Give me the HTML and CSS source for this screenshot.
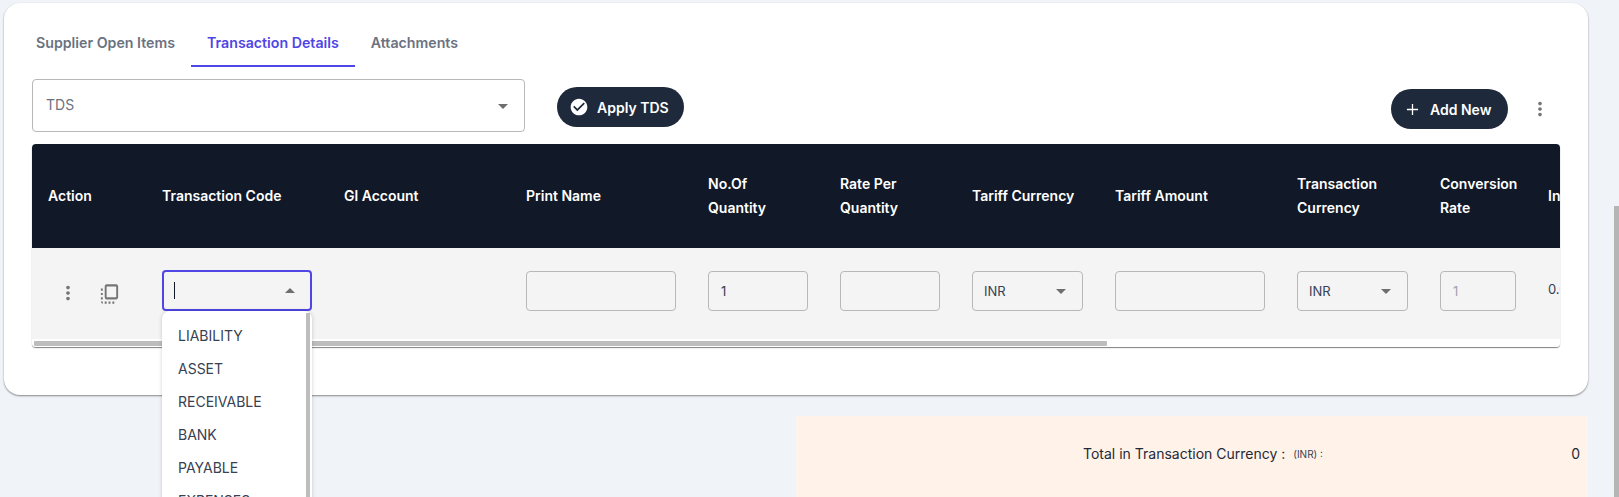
FILE: index.html
```html
<!DOCTYPE html>
<html lang="en">
<head>
<meta charset="utf-8">
<title>Transaction Details</title>
<link rel="stylesheet" href="styles.css">
</head>
<body>
<main class="page">
  <section class="card">
    <nav class="tabs">
      <a class="tab">Supplier Open Items</a>
      <a class="tab tab-active">Transaction Details</a>
      <a class="tab">Attachments</a>
    </nav>
    <div class="toolbar">
      <div class="select tds-select"><span>TDS</span><i class="arrow"></i></div>
      <button class="btn btn-apply">
        <svg class="btn-check" viewBox="0 0 24 24"><path fill="#fff" d="M12 2C6.48 2 2 6.48 2 12s4.48 10 10 10 10-4.48 10-10S17.52 2 12 2zm-2 15l-5-5 1.41-1.41L10 14.17l7.59-7.59L19 8l-9 9z"/></svg>
        Apply TDS
      </button>
      <div class="toolbar-spacer"></div>
      <button class="btn btn-add">
        <svg class="btn-plus" viewBox="0 0 14 14"><path d="M7 1v12M1 7h12" stroke="#fff" stroke-width="1.4" fill="none"/></svg>
        Add New
      </button>
      <svg class="more more-top" viewBox="0 0 24 24"><path d="M12 8c1.1 0 2-.9 2-2s-.9-2-2-2-2 .9-2 2 .9 2 2 2zm0 2c-1.1 0-2 .9-2 2s.9 2 2 2 2-.9 2-2-.9-2-2-2zm0 6c-1.1 0-2 .9-2 2s.9 2 2 2 2-.9 2-2-.9-2-2-2z"/></svg>
    </div>
    <div class="table-wrap">
      <div class="table-scroll">
        <div class="grid grid-head">
          <div class="th">Action</div>
          <div class="th">Transaction Code</div>
          <div class="th">Gl Account</div>
          <div class="th">Print Name</div>
          <div class="th">No.Of Quantity</div>
          <div class="th">Rate Per Quantity</div>
          <div class="th">Tariff Currency</div>
          <div class="th">Tariff Amount</div>
          <div class="th">Transaction Currency</div>
          <div class="th">Conversion Rate</div>
          <div class="th">Invoice Amount</div>
        </div>
        <div class="grid grid-row">
          <div class="td td-action">
            <svg class="more" viewBox="0 0 24 24"><path d="M12 8c1.1 0 2-.9 2-2s-.9-2-2-2-2 .9-2 2 .9 2 2 2zm0 2c-1.1 0-2 .9-2 2s.9 2 2 2 2-.9 2-2-.9-2-2-2zm0 6c-1.1 0-2 .9-2 2s.9 2 2 2 2-.9 2-2-.9-2-2-2z"/></svg>
            <svg class="flip" viewBox="0 0 24 24" preserveAspectRatio="none"><path d="M3 13h2v-2H3v2zm0 4h2v-2H3v2zm2 4v-2H3c0 1.1.89 2 2 2zM3 9h2V7H3v2zm12 12h2v-2h-2v2zm4-18H9c-1.11 0-2 .9-2 2v10c0 1.1.89 2 2 2h10c1.1 0 2-.9 2-2V5c0-1.1-.9-2-2-2zm0 12H9V5h10v10zm-8 6h2v-2h-2v2zm-4 0h2v-2H7v2z"/></svg>
          </div>
          <div class="td"><div class="select select-focus"><i class="caret"></i><i class="arrow arrow-up"></i></div></div>
          <div class="td"></div>
          <div class="td"><input class="field" type="text"></div>
          <div class="td"><input class="field" type="text" value="1"></div>
          <div class="td"><input class="field" type="text"></div>
          <div class="td"><div class="select"><span>INR</span><i class="arrow"></i></div></div>
          <div class="td"><input class="field" type="text"></div>
          <div class="td"><div class="select"><span>INR</span><i class="arrow"></i></div></div>
          <div class="td"><input class="field field-disabled" type="text" value="1" disabled></div>
          <div class="td td-text">0.00</div>
        </div>
        <div class="hscroll"><div class="hscroll-thumb"></div></div>
      </div>
      <ul class="dropdown">
        <li>LIABILITY</li>
        <li>ASSET</li>
        <li>RECEIVABLE</li>
        <li>BANK</li>
        <li>PAYABLE</li>
        <li>EXPENSES</li>
      </ul>
    </div>
  </section>
  <section class="totals">
    <span class="totals-label">Total in Transaction Currency :</span>
    <span class="totals-cur">(INR) :</span>
    <span class="totals-value">0</span>
  </section>
</main>
<div class="page-scroll"></div>
</body>
</html>
```
FILE: styles.css
```css
* { box-sizing: border-box; }
html, body { margin: 0; height: 100%; overflow: hidden; }
body {
  background: #f0f4f9;
  font-family: Inter, "Liberation Sans", sans-serif;
  color: #1f2937;
}
.page { padding: 3px 31px 0 4px; }
.card {
  background: #fff;
  border-radius: 16px;
  padding: 17px 28px 0;
  height: 392px;
  box-shadow: 0 1px 2px rgba(0, 0, 0, .45);
}
.tabs { display: flex; margin-left: -12px; height: 47px; }
.tab {
  padding: 14px 16px 0;
  font-size: 14.2px;
  line-height: 17px;
  font-weight: 600;
  color: #6b7280;
  border-bottom: 2px solid transparent;
  white-space: nowrap;
}
.tab-active { color: #4f46e5; border-bottom-color: #4f46e5; }
.toolbar { display: flex; align-items: center; margin-top: 12px; height: 53px; }
.toolbar-spacer { flex: 1; }
.select {
  position: relative;
  display: flex;
  align-items: center;
  height: 40px;
  padding-left: 11px;
  border: 1px solid #b8b8b8;
  border-radius: 4px;
  font-size: 13px;
  color: #374151;
}
.tds-select { width: 493px; height: 53px; padding: 0 0 2px 13px; font-size: 14px; color: #6b7280; }
.arrow {
  position: absolute;
  right: 16px;
  top: 50%;
  margin-top: -2px;
  border-left: 5px solid transparent;
  border-right: 5px solid transparent;
  border-top: 5px solid #6e6e6e;
}
.arrow-up { border-top: 0; border-bottom: 5px solid #6e6e6e; right: 15px; margin-top: -3px; }
.btn {
  display: flex;
  align-items: center;
  height: 40px;
  border: 0;
  border-radius: 20px;
  background: #1e293b;
  color: #fff;
  font: 600 14px Inter, "Liberation Sans", sans-serif;
  white-space: nowrap;
}
.btn-apply { width: 127px; margin: 3px 0 0 32px; padding: 0 0 0 12px; gap: 8px; }
.btn-check { width: 20px; height: 20px; }
.btn-add { width: 117px; margin-top: 7px; padding: 0 0 0 15px; gap: 11px; }
.btn-plus { width: 13px; height: 13px; }
.more { width: 22px; height: 22px; fill: #757575; flex: none; }
.more-top { margin: 7px 9px 0 21px; }
.table-wrap { position: relative; margin-top: 12px; }
.table-scroll {
  overflow: hidden;
  border-radius: 4px;
  box-shadow: 0 1px 1px rgba(0, 0, 0, .5);
  height: 203px;
}
.grid {
  display: grid;
  grid-template-columns: 114px 182px 182px 182px 132px 132px 143px 182px 143px 108px 140px;
  width: 1640px;
}
.grid-head { background: #111827; height: 104px; align-items: center; }
.th {
  padding: 0 16px;
  font-size: 14px;
  line-height: 24px;
  font-weight: 600;
  color: #fff;
}
.grid-row { background: #f4f4f4; height: 91px; }
.td { padding: 23px 16px 0; font-size: 13px; }
.td-action { display: flex; align-items: flex-start; padding: 33px 0 0 25px; gap: 19px; }
.td-action .more { margin-top: 1px; }
.td-text { padding-top: 33px; color: #374151; }
.flip { width: 23px; height: 26px; fill: #757575; }
.select-focus { border: 2px solid #4f46e5; padding-left: 10px; height: 41px; margin-top: -1px; }
.caret { width: 1px; height: 17px; background: #111827; }
.field {
  display: block;
  width: 100%;
  height: 40px;
  padding: 0 12px;
  border: 1px solid #b8b8b8;
  border-radius: 4px;
  background: transparent;
  font: 13px Inter, "Liberation Sans", sans-serif;
  color: #374151;
}
.field-disabled { color: #9ca3af; }
.hscroll { height: 8px; padding: 2px 2px 1px; background: #fff; }
.hscroll-thumb { width: 1073px; height: 5px; background: #bdbdbd; border-radius: 1px; }
.dropdown {
  position: absolute;
  left: 130px;
  top: 167px;
  width: 150px;
  height: 240px;
  margin: 0;
  padding: 8px 0 0;
  list-style: none;
  background: #fff;
  border-radius: 8px 8px 0 0;
  box-shadow: 0 0 4px rgba(0, 0, 0, .18);
}
.dropdown::after {
  content: "";
  position: absolute;
  top: 2px;
  right: 2px;
  bottom: 0;
  width: 4px;
  background: #bdbdbd;
}
.dropdown li {
  height: 33px;
  line-height: 33px;
  padding-left: 16px;
  font-size: 14px;
  color: #374151;
}
.totals {
  display: flex;
  align-items: flex-start;
  height: 120px;
  margin: 21px 0 0 792px;
  padding: 29px 8px 0 287px;
  background: #fff3e9;
  font-size: 14px;
  line-height: 18px;
  color: #1f2937;
}
.totals-cur { font-size: 10px; margin-left: 8px; color: #374151; }
.totals-value { margin-left: auto; }
.page-scroll {
  position: fixed;
  right: 0;
  top: 206px;
  bottom: 0;
  width: 5px;
  background: #b5b5b5;
}
```
